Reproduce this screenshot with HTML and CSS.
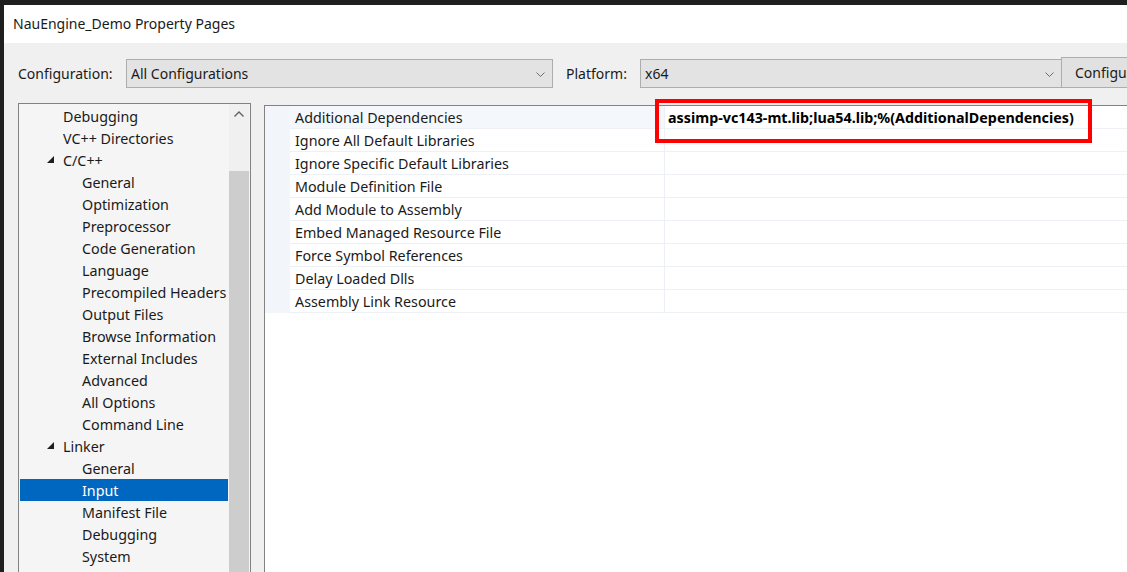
FILE: index.html
```html
<!DOCTYPE html>
<html>
<head>
<meta charset="utf-8">
<link rel="stylesheet" href="styles.css">
</head>
<body>
<div class="window">
  <div class="titlebar">NauEngine_Demo Property Pages</div>
  <div class="toolbar">
    <span class="label label-config">Configuration:</span>
    <div class="combo combo-config">
      <span>All Configurations</span>
      <svg class="chev" width="9" height="5" viewBox="0 0 9 5"><path d="M0.5 0.5 L4.5 4.5 L8.5 0.5" fill="none" stroke="#6d6d6d" stroke-width="1"/></svg>
    </div>
    <span class="label label-platform">Platform:</span>
    <div class="combo combo-platform">
      <span>x64</span>
      <svg class="chev" width="9" height="5" viewBox="0 0 9 5"><path d="M0.5 0.5 L4.5 4.5 L8.5 0.5" fill="none" stroke="#6d6d6d" stroke-width="1"/></svg>
    </div>
    <div class="button"><span class="button-text">Configuration Manager...</span></div>
  </div>
  <div class="main">
    <div class="tree">
      <ul class="tree-list">
        <li class="l1">Debugging</li>
        <li class="l1">VC++ Directories</li>
        <li class="l1 open"><svg class="tri" width="7" height="7" viewBox="0 0 7 7"><polygon points="7,0 7,7 0,7" fill="#1e1e1e"/></svg>C/C++</li>
        <li class="l2">General</li>
        <li class="l2">Optimization</li>
        <li class="l2">Preprocessor</li>
        <li class="l2">Code Generation</li>
        <li class="l2">Language</li>
        <li class="l2">Precompiled Headers</li>
        <li class="l2">Output Files</li>
        <li class="l2">Browse Information</li>
        <li class="l2">External Includes</li>
        <li class="l2">Advanced</li>
        <li class="l2">All Options</li>
        <li class="l2">Command Line</li>
        <li class="l1 open"><svg class="tri" width="7" height="7" viewBox="0 0 7 7"><polygon points="7,0 7,7 0,7" fill="#1e1e1e"/></svg>Linker</li>
        <li class="l2">General</li>
        <li class="l2 selected">Input</li>
        <li class="l2">Manifest File</li>
        <li class="l2">Debugging</li>
        <li class="l2">System</li>
      </ul>
      <div class="scrollbar">
        <div class="sb-up"><svg width="10" height="6" viewBox="0 0 10 6"><path d="M0.5 5.5 L5 1 L9.5 5.5" fill="none" stroke="#606060" stroke-width="1.4"/></svg></div>
        <div class="sb-space"></div>
        <div class="sb-thumb"></div>
      </div>
    </div>
    <div class="grid">
      <div class="rows">
        <div class="row first"><div class="gutter"></div><div class="name">Additional Dependencies</div><div class="value bold">assimp-vc143-mt.lib;lua54.lib;%(AdditionalDependencies)</div></div>
        <div class="row"><div class="gutter"></div><div class="name">Ignore All Default Libraries</div><div class="value"></div></div>
        <div class="row"><div class="gutter"></div><div class="name">Ignore Specific Default Libraries</div><div class="value"></div></div>
        <div class="row"><div class="gutter"></div><div class="name">Module Definition File</div><div class="value"></div></div>
        <div class="row"><div class="gutter"></div><div class="name">Add Module to Assembly</div><div class="value"></div></div>
        <div class="row"><div class="gutter"></div><div class="name">Embed Managed Resource File</div><div class="value"></div></div>
        <div class="row"><div class="gutter"></div><div class="name">Force Symbol References</div><div class="value"></div></div>
        <div class="row"><div class="gutter"></div><div class="name">Delay Loaded Dlls</div><div class="value"></div></div>
        <div class="row"><div class="gutter"></div><div class="name">Assembly Link Resource</div><div class="value"></div></div>
      </div>
      <div class="highlight"></div>
    </div>
  </div>
</div>
</body>
</html>
```

FILE: styles.css
```css
* { box-sizing: border-box; }
html, body { margin: 0; padding: 0; }
body {
  background: #1f1f1f;
  width: 1127px;
  height: 572px;
  overflow: hidden;
  padding: 5px 0 0 4px;
  font-family: "Noto Sans", "Open Sans", sans-serif;
  font-size: 14px;
  color: #1a1a1a;
}
.window {
  background: #f0f0f0;
  height: 567px;
  display: flex;
  flex-direction: column;
  overflow: hidden;
}
.titlebar {
  height: 38px;
  flex: none;
  background: #ffffff;
  display: flex;
  align-items: center;
  padding-left: 9px;
  padding-bottom: 1px;
  color: #1a1a1a;
}
.toolbar {
  height: 60px;
  flex: none;
  display: flex;
  align-items: flex-start;
  padding: 16px 0 0 14px;
  white-space: nowrap;
  overflow: hidden;
}
.label {
  flex: none;
  height: 29px;
  display: flex;
  align-items: center;
}
.label-config { width: 108px; }
.label-platform { width: 74px; margin-left: 13px; }
.combo {
  height: 29px;
  background: #e3e3e3;
  border: 1px solid #adadad;
  display: flex;
  align-items: center;
  justify-content: space-between;
  padding: 0 7px 0 4px;
  flex: none;
}
.combo-config { width: 427px; }
.combo-platform { width: 422px; }
.chev { margin-top: 1px; }
.button {
  flex: none;
  height: 31px;
  margin-top: -2px;
  margin-left: -1px;
  background: #e1e1e1;
  border: 1px solid #adadad;
  display: flex;
  align-items: center;
  padding-left: 13px;
  width: 200px;
}
.main {
  flex: 1;
  min-height: 0;
  display: flex;
  padding-left: 14px;
  font-size: 14.3px;
}
.tree {
  width: 233px;
  flex: none;
  height: 480px;
  border: 1px solid #828282;
  background: #f5f5f5;
  display: flex;
  padding-right: 1px;
}
.tree-list {
  list-style: none;
  margin: 0;
  padding: 1px 0 0 1px;
  width: 210px;
  flex: none;
}
.tree-list li {
  height: 22px;
  display: flex;
  align-items: center;
  white-space: nowrap;
  width: 208px;
}
.tree-list li.l1 { padding-left: 43px; }
.tree-list li.l1.open { padding-left: 27px; }
.tree-list li.l2 { padding-left: 62px; }
.tri { margin-right: 9px; margin-top: -2px; }
.tree-list li.selected {
  background: #0067c0;
  color: #ffffff;
}
.scrollbar {
  width: 20px;
  flex: none;
  background: #f0f0f0;
  display: flex;
  flex-direction: column;
}
.sb-up {
  height: 22px;
  display: flex;
  align-items: center;
  justify-content: center;
  padding-bottom: 2px;
}
.sb-space { height: 45px; }
.sb-thumb {
  flex: 1;
  background: #cdcdcd;
}
.grid {
  position: relative;
  flex: 1;
  margin: 2px 0 0 13px;
  background: #ffffff;
  border-left: 1px solid #828282;
  border-top: 1px solid #828282;
}
.row {
  display: flex;
  height: 23px;
}
.gutter {
  width: 25px;
  flex: none;
  background: #f2f6fb;
}
.name {
  width: 375px;
  flex: none;
  border-bottom: 1px solid #edf1f6;
  border-right: 1px solid #edf1f6;
  padding-left: 5px;
  display: flex;
  align-items: center;
  white-space: nowrap;
}
.row.first .name { background: #f4f7fb; }
.value {
  flex: 1;
  border-bottom: 1px solid #edf1f6;
  padding-left: 3px;
  display: flex;
  align-items: center;
  white-space: nowrap;
}
.bold { font-weight: 700; color: #000; }
.highlight {
  position: absolute;
  left: 390px;
  top: -7px;
  width: 437px;
  height: 44px;
  border: 4px solid #ff0000;
}
```
